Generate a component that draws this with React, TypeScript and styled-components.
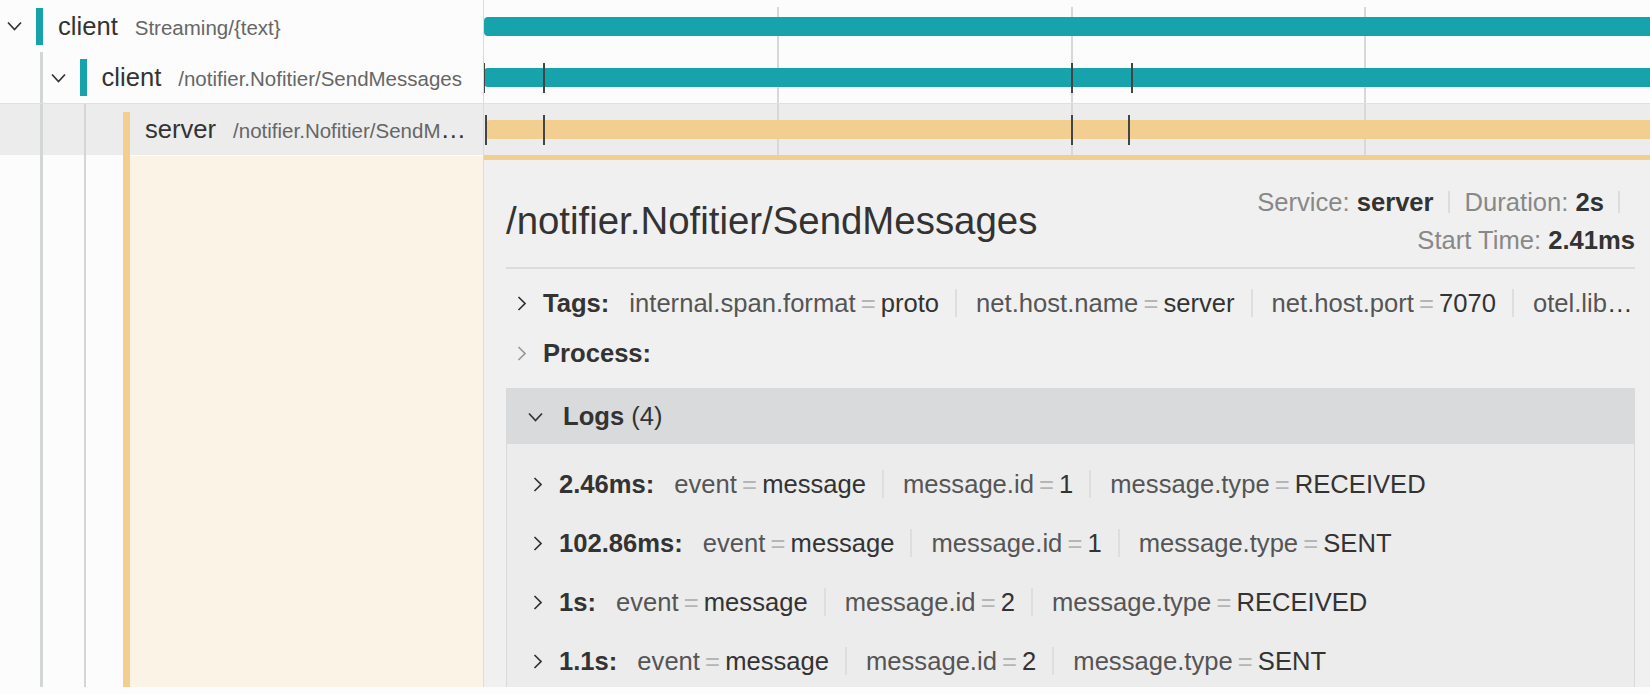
import styled, { createGlobalStyle } from "styled-components";

const TEAL = "#17a3ab";
const ORANGE = "#f2cf91";
const SCALE_WIDTH = 1175;

const GlobalStyle = createGlobalStyle`
  html, body {
    margin: 0;
    padding: 0;
    background: #fcfcfc;
  }
  body {
    font-family: "Liberation Sans", Arial, Helvetica, sans-serif;
    font-size: 25.6px;
    color: #333;
    overflow: hidden;
  }
`;

const Page = styled.div`
  width: 1650px;
  height: 687px;
  overflow: hidden;
  display: flex;
  flex-direction: column;
`;

const SpanRow = styled.div<{ $height: number; $selected?: boolean }>`
  display: flex;
  flex: none;
  box-sizing: border-box;
  height: ${(p) => p.$height}px;
  background: ${(p) => (p.$selected ? "#ececec" : "transparent")};
  border-top: ${(p) => (p.$selected ? "1px solid #e0e0e0" : "none")};
`;

const NameCell = styled.div`
  width: 483px;
  flex: none;
  display: flex;
  align-items: stretch;
  border-right: 1px solid #dcdcdc;
  overflow: hidden;
`;

const IndentGuide = styled.span<{ $thin?: boolean }>`
  width: 43.5px;
  flex: none;
  display: flex;
  justify-content: flex-end;

  &::after {
    content: "";
    width: ${(p) => (p.$thin ? 2 : 3)}px;
    margin-right: ${(p) => (p.$thin ? 1 : 0.5)}px;
    background: #d3d6d6;
  }
`;

const Toggle = styled.span`
  width: 36px;
  flex: none;
  display: flex;
  align-items: center;
  padding-left: 7px;
  box-sizing: border-box;
`;

const Marker = styled.span<{ $color: string; $open?: boolean }>`
  width: 7px;
  flex: none;
  background: ${(p) => p.$color};
  ${(p) =>
    p.$open
      ? "align-self: stretch; margin-top: 8px;"
      : "align-self: center; height: 37px;"}
`;

const Name = styled.div`
  flex: 1;
  min-width: 0;
  align-self: center;
  margin-left: 15px;
  padding-right: 13px;
  white-space: nowrap;
  overflow: hidden;
  text-overflow: ellipsis;
`;

const ServiceName = styled.span`
  color: #333;
  margin-right: 17px;
`;

const Endpoint = styled.span`
  font-size: 20.5px;
  color: #666;
`;

const TimelineCell = styled.div`
  position: relative;
  flex: 1;
  min-width: 0;
  overflow: hidden;
`;

const TimeScale = styled.div`
  position: absolute;
  left: 0;
  top: 0;
  bottom: 0;
  width: ${SCALE_WIDTH}px;
`;

const GridLine = styled.span<{ $top: number }>`
  position: absolute;
  top: ${(p) => p.$top}px;
  bottom: 0;
  width: 2px;
  margin-left: -1px;
  background: #d8d8d8;
`;

const Bar = styled.div<{ $color: string }>`
  position: absolute;
  top: 50%;
  height: 19px;
  margin-top: -9.5px;
  border-radius: 4px;
  background: ${(p) => p.$color};
`;

const LogTick = styled.span`
  position: absolute;
  top: 50%;
  height: 30px;
  margin-top: -15px;
  width: 2px;
  margin-left: -1px;
  background: #444;
`;

const DetailRow = styled.div`
  display: flex;
  flex: 1;
  min-height: 0;
`;

const AccentSpacer = styled.span`
  width: 36px;
  flex: none;
`;

const Accent = styled.span`
  width: 7px;
  flex: none;
  background: ${ORANGE};
`;

const AccentFill = styled.span`
  flex: 1;
  margin-top: 1px;
  background: #fbf3e6;
`;

const DetailPanel = styled.div`
  flex: 1;
  min-width: 0;
  box-sizing: border-box;
  border-top: 5px solid ${ORANGE};
  background: #f0f0f0;
  padding: 23px 15px 0 22px;
  overflow: hidden;
`;

const DetailHeader = styled.div`
  display: flex;
  align-items: center;
  justify-content: space-between;
`;

const Title = styled.h2`
  margin: 0;
  font-size: 38.4px;
  font-weight: normal;
  line-height: 1.2;
  color: #333;
  white-space: nowrap;
`;

const Meta = styled.div`
  width: 420px;
  flex: none;
  display: flex;
  flex-wrap: wrap;
  justify-content: flex-end;
  line-height: 38px;
`;

const MetaItem = styled.span<{ $divided?: boolean }>`
  white-space: nowrap;
  ${(p) =>
    p.$divided &&
    `
    padding-right: 16px;
    margin-right: 15px;
    background: linear-gradient(#dcdcdc, #dcdcdc) no-repeat right center / 2px 22px;
  `}
`;

const MetaLabel = styled.span`
  color: #888;
`;

const MetaValue = styled.strong`
  color: #333;
`;

const HeaderDivider = styled.div`
  height: 2px;
  background: #dcdcdc;
  margin: 8px 0 9px;
`;

const AccRow = styled.div<{ $indent: number; $height: number }>`
  display: flex;
  align-items: center;
  height: ${(p) => p.$height}px;
  padding-left: ${(p) => p.$indent}px;
  white-space: nowrap;
`;

const AccLabel = styled.strong`
  flex: none;
  margin-left: 17px;
  color: #333;
`;

const Summary = styled.div`
  flex: 1;
  min-width: 0;
  margin-left: 20px;
  overflow: hidden;
  text-overflow: ellipsis;
  white-space: nowrap;
`;

const KvItem = styled.span<{ $divided?: boolean }>`
  ${(p) =>
    p.$divided &&
    `
    padding-right: 16px;
    margin-right: 19px;
    border-right: 2px solid #dedede;
  `}
`;

const KvKey = styled.span`
  color: #555;
`;

const KvDelim = styled.span`
  color: #b5b5b5;
  padding: 0 0.2em;
`;

const KvValue = styled.span`
  color: #333;
`;

const LogsBox = styled.div`
  margin-top: 10px;
  border: 1px solid #d8d9da;
  border-bottom: none;
`;

const LogsHeader = styled.div`
  display: flex;
  align-items: center;
  height: 55px;
  padding-left: 21px;
  background: #d8dadb;
`;

const LogsTitle = styled.span`
  margin-left: 20px;
  color: #333;
`;

const LogsBody = styled.div`
  background: #ececec;
  padding-top: 11px;
  padding-bottom: 40px;
`;

type Chev = "down" | "right";

function Chevron({ dir, color = "#333" }: { dir: Chev; color?: string }) {
  if (dir === "down") {
    return (
      <svg width="15" height="10" viewBox="0 0 15 10">
        <polyline points="1,1.5 7.5,8.5 14,1.5" fill="none" stroke={color} strokeWidth="1.7" />
      </svg>
    );
  }
  return (
    <svg width="9" height="15" viewBox="0 0 9 15" style={{ flex: "none" }}>
      <polyline points="1.5,1 8,7.5 1.5,14" fill="none" stroke={color} strokeWidth="1.7" />
    </svg>
  );
}

type Kv = [string, string];

function KvSummary({ items }: { items: Kv[] }) {
  return (
    <Summary>
      {items.map(([k, v], i) => (
        <KvItem key={k} $divided={i < items.length - 1}>
          <KvKey>{k}</KvKey>
          <KvDelim>=</KvDelim>
          <KvValue>{v}</KvValue>
        </KvItem>
      ))}
    </Summary>
  );
}

const spans = [
  {
    level: 0,
    service: "client",
    endpoint: "Streaming/{text}",
    color: TEAL,
    expandable: true,
    barLeft: 0,
    ticks: [] as number[],
    height: 52,
  },
  {
    level: 1,
    service: "client",
    endpoint: "/notifier.Nofitier/SendMessages",
    color: TEAL,
    expandable: true,
    barLeft: 0,
    ticks: [0, 0.0511, 0.5, 0.5515],
    height: 51,
  },
  {
    level: 2,
    service: "server",
    endpoint: "/notifier.Nofitier/SendMessages",
    color: ORANGE,
    expandable: false,
    barLeft: 0.0015,
    ticks: [0.0015, 0.0511, 0.5, 0.549],
    height: 52,
    selected: true,
  },
];

const tags: Kv[] = [
  ["internal.span.format", "proto"],
  ["net.host.name", "server"],
  ["net.host.port", "7070"],
  ["otel.library.name", "go.opentelemetry.io/otel"],
];

const logs: { time: string; fields: Kv[] }[] = [
  { time: "2.46ms", fields: [["event", "message"], ["message.id", "1"], ["message.type", "RECEIVED"]] },
  { time: "102.86ms", fields: [["event", "message"], ["message.id", "1"], ["message.type", "SENT"]] },
  { time: "1s", fields: [["event", "message"], ["message.id", "2"], ["message.type", "RECEIVED"]] },
  { time: "1.1s", fields: [["event", "message"], ["message.id", "2"], ["message.type", "SENT"]] },
];

const gridPoints = [0.25, 0.5, 0.75];

function Guides({ level }: { level: number }) {
  return (
    <>
      {Array.from({ length: level }, (_, i) => (
        <IndentGuide key={i} $thin={i > 0} />
      ))}
    </>
  );
}

function App() {
  return (
    <Page>
      <GlobalStyle />
      {spans.map((s, idx) => (
        <SpanRow key={idx} $height={s.height} $selected={s.selected}>
          <NameCell>
            <Guides level={s.level} />
            <Toggle>{s.expandable && <Chevron dir="down" />}</Toggle>
            <Marker $color={s.color} $open={s.selected} />
            <Name>
              <ServiceName>{s.service}</ServiceName>
              <Endpoint>{s.endpoint}</Endpoint>
            </Name>
          </NameCell>
          <TimelineCell>
            <TimeScale>
              {gridPoints.map((g) => (
                <GridLine key={g} $top={idx === 0 ? 7 : 0} style={{ left: `${g * 100}%` }} />
              ))}
              <Bar
                $color={s.color}
                style={{ left: `${s.barLeft * 100}%`, width: `${(1 - s.barLeft) * 100}%` }}
              />
              {s.ticks.map((t) => (
                <LogTick key={t} style={{ left: `${t * 100}%` }} />
              ))}
            </TimeScale>
          </TimelineCell>
        </SpanRow>
      ))}

      <DetailRow>
        <NameCell>
          <Guides level={2} />
          <AccentSpacer />
          <Accent />
          <AccentFill />
        </NameCell>
        <DetailPanel>
          <DetailHeader>
            <Title>/notifier.Nofitier/SendMessages</Title>
            <Meta>
              <MetaItem $divided>
                <MetaLabel>Service: </MetaLabel>
                <MetaValue>server</MetaValue>
              </MetaItem>
              <MetaItem $divided>
                <MetaLabel>Duration: </MetaLabel>
                <MetaValue>2s</MetaValue>
              </MetaItem>
              <MetaItem>
                <MetaLabel>Start Time: </MetaLabel>
                <MetaValue>2.41ms</MetaValue>
              </MetaItem>
            </Meta>
          </DetailHeader>
          <HeaderDivider />

          <AccRow $indent={11} $height={50}>
            <Chevron dir="right" />
            <AccLabel>Tags:</AccLabel>
            <KvSummary items={tags} />
          </AccRow>
          <AccRow $indent={11} $height={50}>
            <Chevron dir="right" color="#999" />
            <AccLabel>Process:</AccLabel>
          </AccRow>

          <LogsBox>
            <LogsHeader>
              <Chevron dir="down" />
              <LogsTitle>
                <strong>Logs</strong> (4)
              </LogsTitle>
            </LogsHeader>
            <LogsBody>
              {logs.map((l) => (
                <AccRow key={l.time} $indent={26} $height={59}>
                  <Chevron dir="right" />
                  <AccLabel>{l.time}:</AccLabel>
                  <KvSummary items={l.fields} />
                </AccRow>
              ))}
            </LogsBody>
          </LogsBox>
        </DetailPanel>
      </DetailRow>
    </Page>
  );
}

export default App;
